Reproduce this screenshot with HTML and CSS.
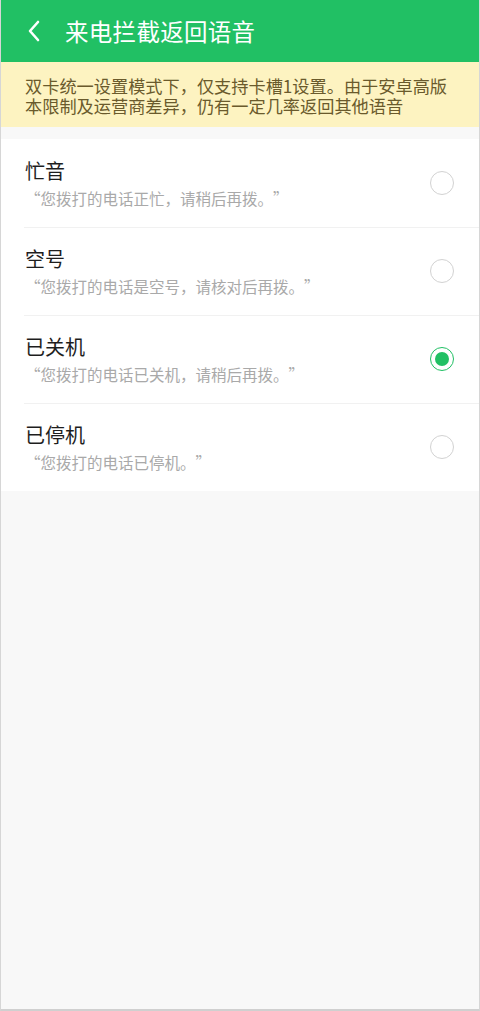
FILE: index.html
```html
<!DOCTYPE html>
<html lang="zh-CN">
<head>
<meta charset="utf-8">
<title>来电拦截返回语音</title>
<link rel="stylesheet" href="styles.css">
</head>
<body>
<div class="page">
  <header class="topbar">
    <svg class="back" width="16" height="22" viewBox="0 0 16 22"><path d="M12 2 L4 11 L12 20" fill="none" stroke="#fff" stroke-width="2.6" stroke-linecap="round" stroke-linejoin="round"/></svg>
    <h1 class="title">来电拦截返回语音</h1>
  </header>
  <div class="notice">双卡统一设置模式下，仅支持卡槽1设置。由于安卓高版本限制及运营商差异，仍有一定几率返回其他语音</div>
  <div class="gap"></div>
  <ul class="list">
    <li class="item">
      <div class="text">
        <div class="name">忙音</div>
        <div class="desc">“您拨打的电话正忙，请稍后再拨。”</div>
      </div>
      <span class="radio"></span>
    </li>
    <li class="item">
      <div class="text">
        <div class="name">空号</div>
        <div class="desc">“您拨打的电话是空号，请核对后再拨。”</div>
      </div>
      <span class="radio"></span>
    </li>
    <li class="item">
      <div class="text">
        <div class="name">已关机</div>
        <div class="desc">“您拨打的电话已关机，请稍后再拨。”</div>
      </div>
      <span class="radio checked"></span>
    </li>
    <li class="item">
      <div class="text">
        <div class="name">已停机</div>
        <div class="desc">“您拨打的电话已停机。”</div>
      </div>
      <span class="radio"></span>
    </li>
  </ul>
  <div class="rest"></div>
</div>
</body>
</html>
```

FILE: styles.css
```css
* { box-sizing: border-box; }
html, body { margin: 0; padding: 0; }
body {
  font-family: "Noto Sans CJK SC", "Noto Sans", sans-serif;
  background: #f8f8f8;
  width: 480px;
  height: 1011px;
  overflow: hidden;
}
.page {
  width: 480px;
  height: 1011px;
  display: flex;
  flex-direction: column;
  border-left: 1px solid #d6d6d6;
  border-right: 1px solid #d6d6d6;
  border-bottom: 2px solid #d0d0d0;
  background: #f8f8f8;
}
.topbar {
  height: 62px;
  background: #21c064;
  display: flex;
  align-items: center;
  padding-left: 25px;
  flex: none;
}
.back { display: block; }
.title {
  margin: 0 0 0 23px;
  font-size: 23.5px;
  font-weight: 400;
  color: #fff;
  line-height: 30px;
  letter-spacing: 0.3px;
}
.notice {
  background: #fdf3c1;
  color: #6a5a2c;
  font-size: 17.2px;
  line-height: 20px;
  padding: 14px 18px 0 24px;
  height: 65px;
  flex: none;
}
.gap { height: 12px; background: #f8f8f8; flex: none; }
.list {
  list-style: none;
  margin: 0;
  padding: 0;
  background: #fff;
  flex: none;
}
.item {
  display: flex;
  align-items: center;
  justify-content: space-between;
  padding: 18px 25px 18px 24px;
  height: 88px;
  position: relative;
}
.item + .item::before {
  content: "";
  position: absolute;
  left: 23px;
  right: 0;
  top: 0;
  height: 1px;
  background: #f1f1f1;
}
.text { display: flex; flex-direction: column; gap: 3px; }
.name {
  font-size: 20px;
  line-height: 26px;
  color: #1e1e1e;
}
.desc {
  font-size: 15.5px;
  line-height: 22px;
  color: #a9a9a9;
  text-spacing-trim: space-all;
}
.radio {
  width: 24px;
  height: 24px;
  border-radius: 50%;
  border: 1.5px solid #d2d2d2;
  flex: none;
  display: flex;
  align-items: center;
  justify-content: center;
}
.radio.checked { border-color: #21c064; }
.radio.checked::after {
  content: "";
  width: 14px;
  height: 14px;
  border-radius: 50%;
  background: #21c064;
}
.rest { flex: 1; background: #f8f8f8; }
```
